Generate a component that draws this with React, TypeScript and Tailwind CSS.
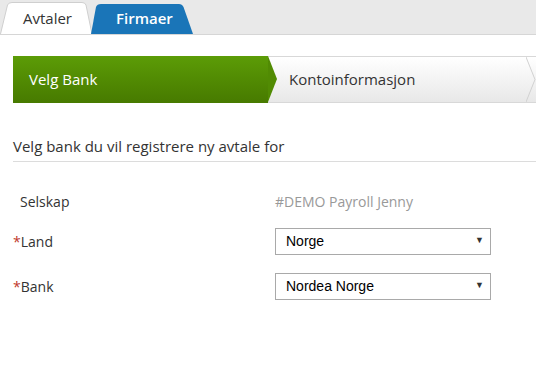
import React from 'react'

const font = { fontFamily: '"Open Sans", "Liberation Sans", sans-serif' }

export default function App() {
  return (
    <div className="w-[536px] h-[377px] bg-white overflow-hidden" style={font}>
      {/* Tabs */}
      <div className="h-[35px] bg-[#e9e9e9] border-b border-[#d6d6d6] flex items-end">
        <div className="relative w-[92px] h-[32px] flex items-end justify-center pl-[3px]">
          <svg className="absolute inset-0 h-full w-full" viewBox="0 0 92 32" preserveAspectRatio="none">
            <path d="M0.5 32 L7.5 3 Q8.5 0.5 12 0.5 L82 0.5 Q85 0.5 86 3 L92 32" fill="#ffffff" stroke="#cfcfcf" strokeWidth="1" />
          </svg>
          <span className="relative mb-[5px] text-[15px] text-[#333]">Avtaler</span>
        </div>
        <div className="relative w-[103px] h-[30px] -ml-[1px] flex items-end">
          <svg className="absolute inset-0 h-full w-full" viewBox="0 0 103 30" preserveAspectRatio="none">
            <path d="M0 30 L5 3 Q6 0 10 0 L88 0 Q91 0 92.5 3 L102 30 Z" fill="#1a75b8" />
          </svg>
          <span className="relative mb-[5px] ml-[25px] text-[15px] font-semibold text-white">Firmaer</span>
        </div>
      </div>

      {/* Wizard steps */}
      <div className="mt-[21px] ml-[13px] flex h-[47px]">
        <div className="relative w-[255px] bg-gradient-to-b from-[#5c9c07] to-[#477a00] flex items-center pl-[16px] text-white text-[15px] z-10">
          Velg Bank
          <div className="absolute right-[-9px] top-0 h-0 w-0 border-y-[23.5px] border-y-transparent border-l-[9px] border-l-[#518b03]" />
        </div>
        <div className="relative flex-1 bg-gradient-to-b from-[#ffffff] to-[#e8e8e8] border-y border-[#d8d8d8] flex items-center pl-[21px] text-[15px] text-[#333]">
          Kontoinformasjon
          <svg className="absolute right-0 top-0 h-full w-[10px]" viewBox="0 0 10 47" preserveAspectRatio="none">
            <path d="M0 0 L9 23.5 L0 47" fill="none" stroke="#d0d0d0" strokeWidth="1" />
          </svg>
        </div>
      </div>

      {/* Heading */}
      <div className="mt-[32px] ml-[13px] border-b border-[#dcdcdc] pb-[3px] text-[15px] text-[#333]">
        Velg bank du vil registrere ny avtale for
      </div>

      {/* Form */}
      <div className="mt-[25px] pl-[13px] text-[14px] text-[#333] flex flex-col">
        <div className="flex items-center h-[30px]">
          <div className="w-[262px] pl-[7px]">Selskap</div>
          <div className="text-[#999]">#DEMO Payroll Jenny</div>
        </div>
        <div className="flex items-center h-[27px] mt-[11px]">
          <div className="w-[262px]">
            <span className="text-[#c0392b]">*</span>Land
          </div>
          <Select value="Norge" />
        </div>
        <div className="flex items-center h-[27px] mt-[18px]">
          <div className="w-[262px]">
            <span className="text-[#c0392b]">*</span>Bank
          </div>
          <Select value="Nordea Norge" />
        </div>
      </div>
    </div>
  )
}

function Select({ value }: { value: string }) {
  return (
    <div
      className="w-[216px] h-[27px] border border-[#a9a9a9] bg-white flex items-center justify-between pl-[10px] pr-[6px] text-[14px] text-black"
      style={{ fontFamily: '"Liberation Sans", Arial, sans-serif' }}
    >
      <span>{value}</span>
      <span className="text-[9px] text-[#333]">▼</span>
    </div>
  )
}
